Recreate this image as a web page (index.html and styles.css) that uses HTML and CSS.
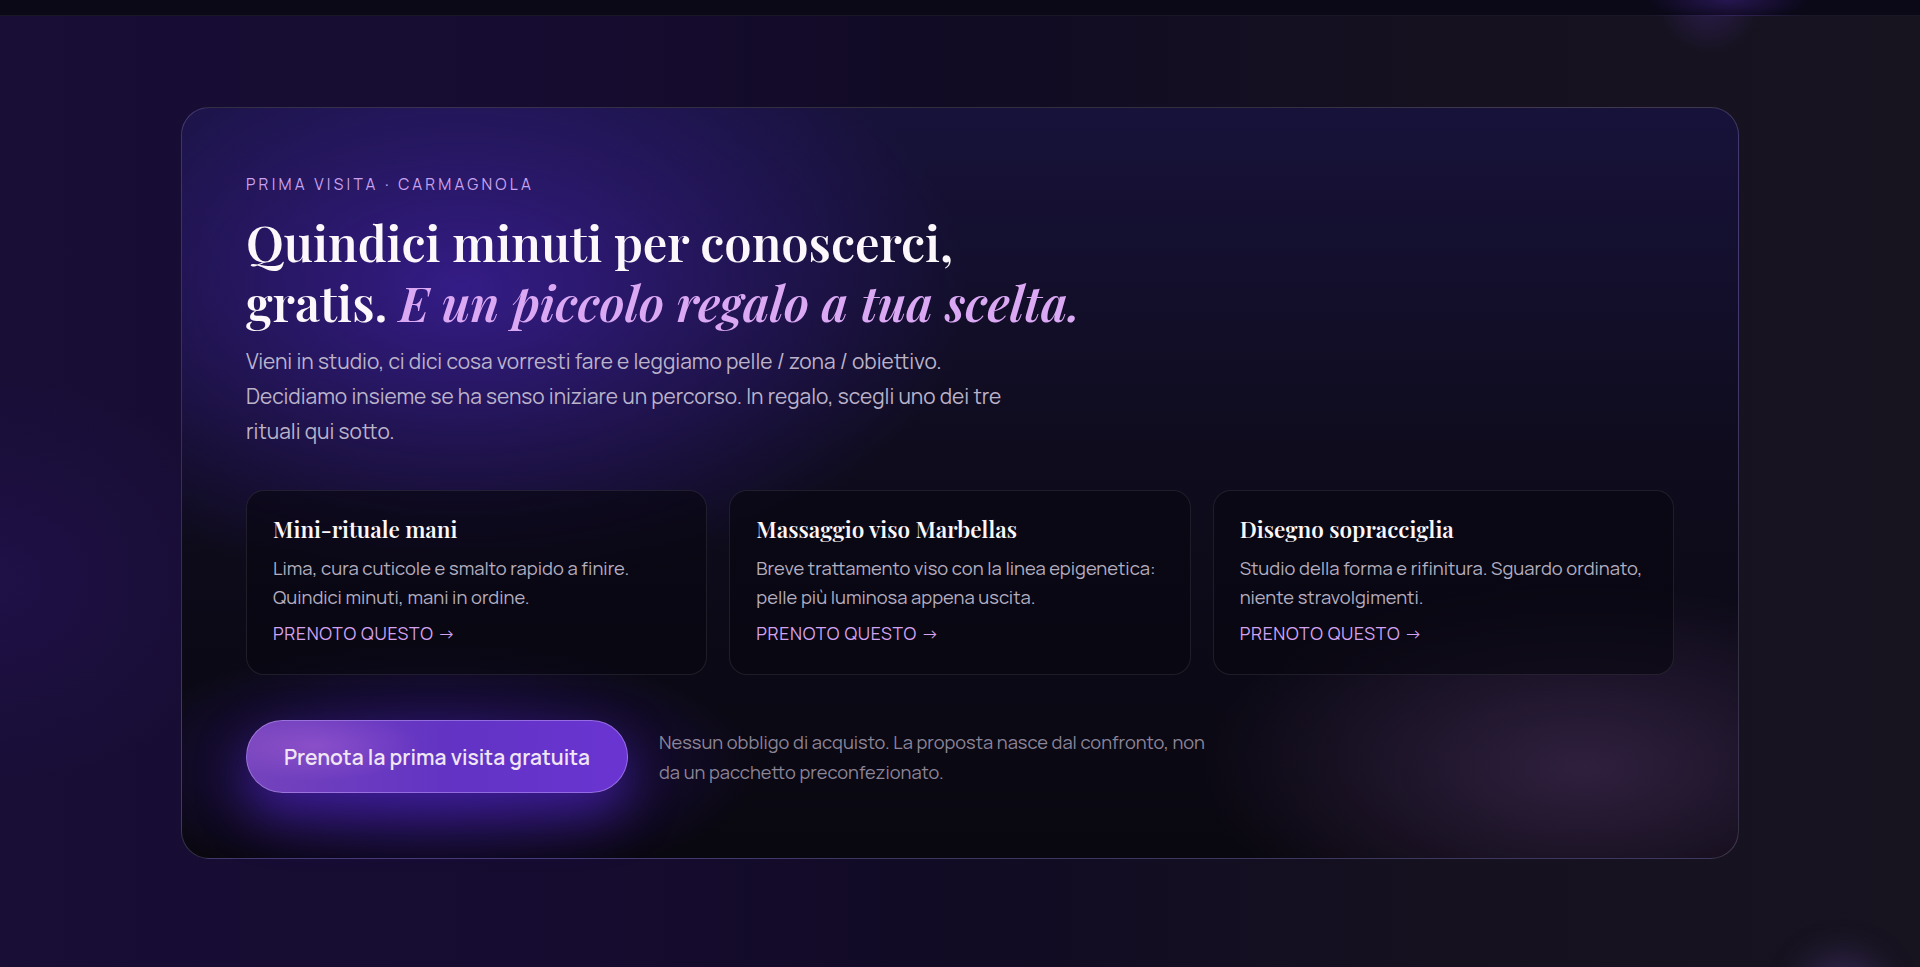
FILE: index.html
```html
<!DOCTYPE html>
<html lang="it">

<head>
    <meta charset="utf-8">
    <title>Prima visita · Carmagnola</title>
    <link rel="stylesheet" href="styles.css">
</head>

<body>
    <header class="topbar"></header>

    <main class="page">
        <section class="offer">
            <p class="eyebrow">Prima visita · Carmagnola</p>
            <h1 class="offer-title">Quindici minuti per conoscerci,<br>gratis. <em>E un piccolo regalo a tua scelta.</em></h1>
            <p class="offer-lead">Vieni in studio, ci dici cosa vorresti fare e leggiamo pelle / zona / obiettivo.
                Decidiamo insieme se ha senso iniziare un percorso. In regalo, scegli uno dei tre rituali qui sotto.</p>

            <div class="gifts">
                <article class="gift">
                    <h3>Mini-rituale mani</h3>
                    <p>Lima, cura cuticole e smalto rapido a finire. Quindici minuti, mani in ordine.</p>
                    <a href="#" class="gift-link">Prenoto questo →</a>
                </article>
                <article class="gift">
                    <h3>Massaggio viso Marbellas</h3>
                    <p>Breve trattamento viso con la linea epigenetica: pelle più luminosa appena uscita.</p>
                    <a href="#" class="gift-link">Prenoto questo →</a>
                </article>
                <article class="gift">
                    <h3>Disegno sopracciglia</h3>
                    <p>Studio della forma e rifinitura. Sguardo ordinato, niente stravolgimenti.</p>
                    <a href="#" class="gift-link">Prenoto questo →</a>
                </article>
            </div>

            <div class="actions">
                <a href="#" class="btn-primary">Prenota la prima visita gratuita</a>
                <p class="actions-note">Nessun obbligo di acquisto. La proposta nasce dal confronto, non da un pacchetto preconfezionato.</p>
            </div>
        </section>
    </main>

    <!-- floating chat bubble, sits mostly below the fold -->
    <div class="chat-bubble"></div>
</body>

</html>
```

FILE: styles.css
```css
* {
    box-sizing: border-box;
}

html,
body {
    margin: 0;
    padding: 0;
}

body {
    min-height: 967px;
    font-family: Manrope, Inter, "Noto Sans", sans-serif;
    color: #f4eef8;
    background:
        radial-gradient(ellipse 18% 30% at 0% 60%, rgba(40, 18, 90, 0.45), transparent 70%),
        radial-gradient(ellipse 4% 8% at 89% 0%, rgba(80, 50, 160, 0.35), transparent 70%),
        linear-gradient(90deg, #180e36 0%, #160c30 30%, #110b24 50%, #15111f 75%, #17131f 100%);
    overflow: hidden;
}

.topbar {
    height: 16px;
    background:
        radial-gradient(ellipse 6% 200% at 90% 0%, rgba(70, 40, 150, 0.45), transparent 70%),
        #0b0818;
    border-bottom: 1px solid rgba(255, 255, 255, 0.06);
}

.page {
    padding: 91px 181px 0;
}

/* main offer card */
.offer {
    height: 752px;
    padding: 66px 64px 64px;
    border-radius: 28px;
    border: 1px solid rgba(200, 190, 230, 0.22);
    background:
        radial-gradient(ellipse 45% 56% at 18% 24%, rgba(58, 30, 150, 0.85), transparent 72%),
        radial-gradient(ellipse 28% 22% at 16% 88%, rgba(70, 30, 190, 0.45), transparent 75%),
        radial-gradient(ellipse 34% 34% at 90% 88%, rgba(72, 48, 92, 0.6), transparent 72%),
        linear-gradient(180deg, #17123a 0%, #0f0c1e 45%, #09070f 100%);
}

.eyebrow {
    margin: 0 0 18px;
    font-size: 15.5px;
    line-height: 20px;
    letter-spacing: 0.21em;
    text-transform: uppercase;
    color: #c9a3ef;
}

.offer-title {
    margin: 0;
    font-family: "Playfair Display", "Liberation Serif", serif;
    font-size: 48.8px;
    line-height: 60px;
    font-weight: 600;
    color: #fbf7fb;
}

.offer-title em {
    font-style: italic;
    color: #dba8f4;
}

.offer-lead {
    max-width: 780px;
    margin: 12px 0 0;
    font-size: 20.9px;
    line-height: 35px;
    color: #bbb3ca;
}

/* three gift options */
.gifts {
    display: grid;
    grid-template-columns: repeat(3, 1fr);
    gap: 22px;
    margin-top: 41px;
}

.gift {
    height: 185px;
    padding: 22px 26px;
    border-radius: 18px;
    border: 1px solid rgba(255, 255, 255, 0.09);
    background: rgba(8, 6, 16, 0.62);
}

.gift h3 {
    margin: 0 0 9px;
    font-family: "Playfair Display", "Liberation Serif", serif;
    font-size: 22.5px;
    line-height: 32px;
    font-weight: 600;
    color: #fbf7fb;
}

.gift p {
    margin: 0 0 8px;
    font-size: 18.4px;
    line-height: 29px;
    color: #b4aec0;
}

.gift-link {
    font-size: 17.5px;
    line-height: 26px;
    letter-spacing: 0.04em;
    text-transform: uppercase;
    text-decoration: none;
    color: #d3a3f2;
}

/* call to action */
.actions {
    display: flex;
    align-items: center;
    gap: 31px;
    margin-top: 45px;
}

.btn-primary {
    display: flex;
    align-items: center;
    justify-content: center;
    width: 382px;
    height: 73px;
    flex-shrink: 0;
    border-radius: 40px;
    border: 1px solid rgba(205, 175, 255, 0.45);
    background:
        radial-gradient(ellipse 40% 70% at 18% 35%, rgba(190, 110, 220, 0.35), transparent 70%),
        linear-gradient(90deg, #7443bc 0%, #6233c4 55%, #6a34d2 100%);
    box-shadow: 0 22px 48px rgba(88, 40, 215, 0.55);
    font-size: 21px;
    font-weight: 600;
    color: #f1e6f4;
    text-decoration: none;
}

.actions-note {
    max-width: 565px;
    margin: 0;
    font-size: 18.3px;
    line-height: 30px;
    color: #8c8599;
}

.chat-bubble {
    position: fixed;
    right: 48px;
    bottom: -60px;
    width: 60px;
    height: 60px;
    border-radius: 50%;
    background: #8a70c8;
    box-shadow: 0 0 36px 12px rgba(120, 90, 200, 0.28);
}
```
